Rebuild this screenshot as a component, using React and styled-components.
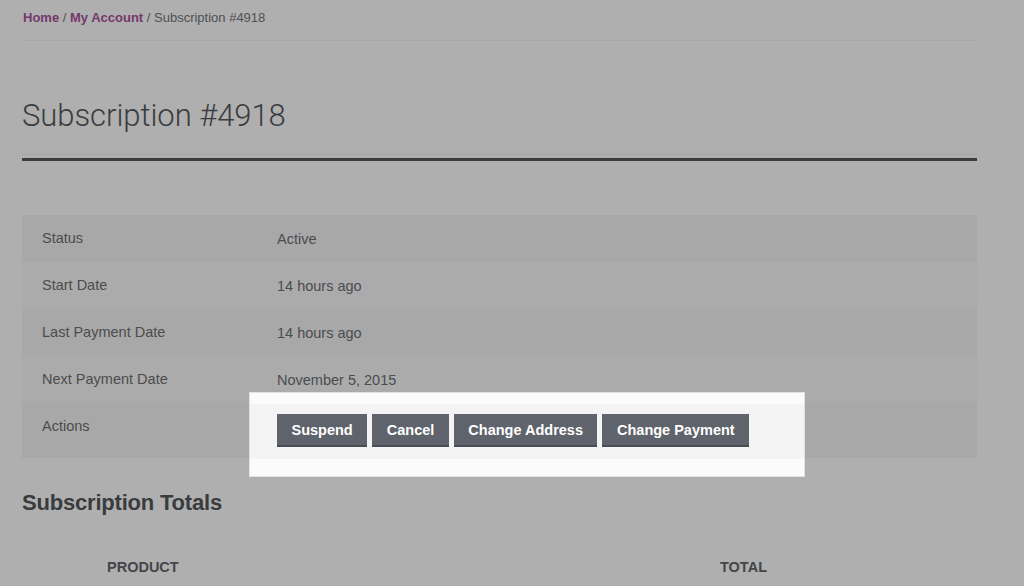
import React from "react";
import styled, { createGlobalStyle } from "styled-components";

const GlobalStyle = createGlobalStyle`
  html, body {
    margin: 0;
    background: #afafaf;
    font-family: "Liberation Sans", Arial, sans-serif;
    color: #4a4b4d;
  }
`;

const Page = styled.div`
  width: 955px;
  padding: 0 22px;
  height: 586px;
  overflow: hidden;
`;

const Breadcrumb = styled.nav`
  height: 40px;
  line-height: 36px;
  font-size: 13px;
  padding-left: 1px;
  color: #505052;
  border-bottom: 1px solid #a6a6a6;
  a {
    color: #74386a;
    font-weight: 700;
    text-decoration: none;
  }
`;

const Title = styled.h1`
  margin: 55px 0 0;
  font-family: Roboto, "Liberation Sans", sans-serif;
  font-weight: 300;
  font-size: 31px;
  line-height: 40px;
  color: #3a3c3f;
  letter-spacing: -0.05px;
`;

const TitleRule = styled.div`
  margin-top: 18px;
  border-top: 1px solid #a7a7a7;
  padding-top: 3px;
  &::after {
    content: "";
    display: block;
    height: 3px;
    background: #3a3c3f;
  }
`;

const Table = styled.div`
  margin-top: 54px;
  background: #aaaaaa;
`;

const Row = styled.div`
  display: grid;
  grid-template-columns: 255px 1fr;
  align-items: center;
  height: ${(p) => (p.$tall ? 55 : 47)}px;
  background: ${(p) => (p.$odd ? "#a8a8a8" : "#ababab")};
  font-size: 14.5px;
  color: #4b4c4e;
`;

const Label = styled.div`
  align-self: start;
  line-height: 47px;
  padding-left: 20px;
`;

const Value = styled.div`
  position: relative;
  display: flex;
  gap: 5px;
  align-items: center;
`;

const Spotlight = styled.div`
  position: absolute;
  left: -28px;
  top: -22px;
  width: 554px;
  height: 83px;
  border: 1px solid #e2e2e2;
  background: linear-gradient(
    to bottom,
    #fbfbfb 0,
    #fbfbfb 11px,
    #f4f4f4 11px,
    #f4f4f4 66px,
    #fbfbfb 66px
  );
  z-index: 0;
`;

const Button = styled.button`
  position: relative;
  z-index: 1;
  height: 33px;
  padding: 0 14.5px;
  border: 0;
  border-bottom: 2px solid #4a4d53;
  background: #5f636b;
  color: #ffffff;
  font-family: "Liberation Sans", Arial, sans-serif;
  font-weight: 700;
  font-size: 14.5px;
  cursor: pointer;
`;

const Subtitle = styled.h2`
  margin: 31px 0 0;
  font-size: 22px;
  line-height: 28px;
  font-weight: 700;
  letter-spacing: -0.2px;
  color: #3a3b3d;
`;

const HeadRow = styled.div`
  display: grid;
  grid-template-columns: 698px 1fr;
  margin-top: 42px;
  font-size: 14.5px;
  font-weight: 700;
  text-transform: uppercase;
  color: #444548;
  span:first-child {
    padding-left: 85px;
  }
`;

const rows = [
  ["Status", "Active"],
  ["Start Date", "14 hours ago"],
  ["Last Payment Date", "14 hours ago"],
  ["Next Payment Date", "November 5, 2015"],
];

export default function App() {
  return (
    <Page>
      <GlobalStyle />
      <Breadcrumb>
        <a href="#">Home</a> / <a href="#">My Account</a> / Subscription #4918
      </Breadcrumb>
      <Title>Subscription #4918</Title>
      <TitleRule />
      <Table>
        {rows.map(([k, v], i) => (
          <Row key={k} $odd={i % 2 === 0}>
            <Label>{k}</Label>
            <Value>{v}</Value>
          </Row>
        ))}
        <Row $tall $odd>
          <Label>Actions</Label>
          <Value>
            <Spotlight />
            <Button>Suspend</Button>
            <Button>Cancel</Button>
            <Button>Change Address</Button>
            <Button>Change Payment</Button>
          </Value>
        </Row>
      </Table>
      <Subtitle>Subscription Totals</Subtitle>
      <HeadRow>
        <span>Product</span>
        <span>Total</span>
      </HeadRow>
    </Page>
  );
}
